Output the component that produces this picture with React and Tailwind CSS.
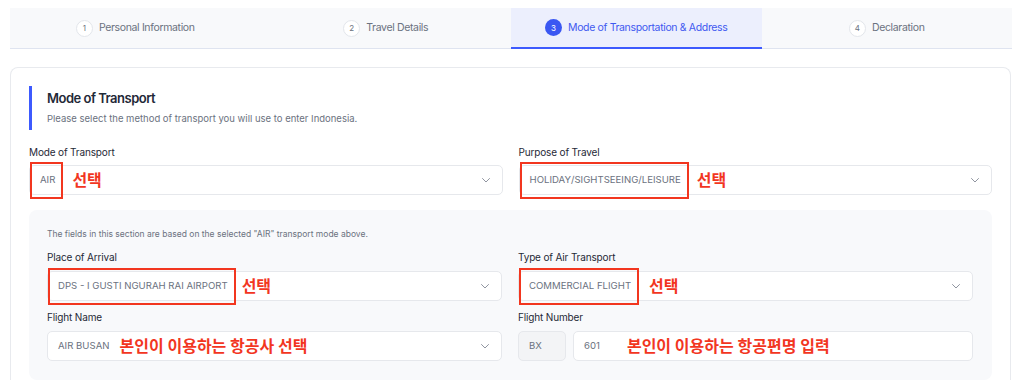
import React from 'react';

const steps = [
  { n: 1, label: 'Personal Information' },
  { n: 2, label: 'Travel Details' },
  { n: 3, label: 'Mode of Transportation & Address', active: true },
  { n: 4, label: 'Declaration' },
];

function Chevron() {
  return (
    <svg width="12" height="12" viewBox="0 0 24 24" fill="none" stroke="#6b7280" strokeWidth="1.5" strokeLinecap="round" strokeLinejoin="round">
      <path d="M5 9l7 7 7-7" />
    </svg>
  );
}

// red annotation box drawn over the selected value
function Marked({ children }) {
  return (
    <span className="relative">
      {children}
      <span className="pointer-events-none absolute -left-[10px] -right-[8px] -top-[11px] -bottom-[12px] border-2 border-[#f2361f]" />
    </span>
  );
}

function Note({ children, className = '' }) {
  return <span className={`text-[16px] font-bold text-[#f2361f] leading-none ${className}`}>{children}</span>;
}

function Select({ children }) {
  return (
    <div className="flex h-[30px] items-center justify-between rounded-[5px] border border-[#e6e8ec] bg-white pl-[10px] pr-[10px]">
      <div className="flex items-center text-[9.6px] text-[#6b7280]">{children}</div>
      <Chevron />
    </div>
  );
}

function Field({ label, children, labelGap = 'mb-2' }) {
  return (
    <div className="flex flex-col">
      <div className={`text-[10px] leading-[12px] tracking-[-0.15px] text-[#1f2937] ${labelGap}`}>{label}</div>
      {children}
    </div>
  );
}

export default function App() {
  return (
    <div className="min-h-screen bg-white pt-2" style={{ fontFamily: "Inter, 'Noto Sans CJK KR', sans-serif" }}>
      <div className="ml-[10px] mr-[12px] grid h-[41px] grid-cols-4 border-b border-[#dfe4f0] bg-[#f8f9fb]">
        {steps.map((s) => (
          <div
            key={s.n}
            className={`flex items-center justify-center gap-[6px] ${s.active ? 'border-b-2 border-[#3d5afe] bg-[#eceffd] -mb-px' : ''}`}
          >
            <span
              className={`flex h-[17px] w-[17px] items-center justify-center rounded-full text-[8px] ${
                s.active ? 'bg-[#3a57f2] text-white' : 'border border-[#e3e6eb] bg-white text-[#6b7280]'
              }`}
            >
              {s.n}
            </span>
            <span className={`text-[10.5px] tracking-[-0.35px] ${s.active ? 'text-[#3f59f0]' : 'text-[#6b7280]'}`}>{s.label}</span>
          </div>
        ))}
      </div>

      <div className="ml-[10px] mr-[13px] mt-[18px] rounded-t-[8px] border border-b-0 border-[#e8eaee] bg-white px-[18px] pt-[18px]">
        <div className="border-l-[3px] border-[#3d5afe] pl-[15px] pt-[4px] pb-[5px]">
          <div className="text-[13px] font-semibold leading-[16px] tracking-[-0.5px] text-[#1f2937]">Mode of Transport</div>
          <div className="mt-[7px] text-[9.5px] leading-[12px] text-[#6b7280]">
            Please select the method of transport you will use to enter Indonesia.
          </div>
        </div>

        <div className="mt-4 grid grid-cols-2 gap-4">
          <Field label="Mode of Transport" labelGap="mb-[7px]">
            <Select>
              <Marked>AIR</Marked>
              <Note className="ml-[17px]">선택</Note>
            </Select>
          </Field>
          <Field label="Purpose of Travel" labelGap="mb-[7px]">
            <Select>
              <Marked>HOLIDAY/SIGHTSEEING/LEISURE</Marked>
              <Note className="ml-[16px]">선택</Note>
            </Select>
          </Field>
        </div>

        <div className="mt-[15px] rounded-[8px] bg-[#f8f9fb] pl-[18px] pr-[19px] pt-[18px] pb-[19px]">
          <div className="text-[8.5px] leading-[12px] text-[#6b7280]">
            The fields in this section are based on the selected "AIR" transport mode above.
          </div>
          <div className="mt-[11px] grid grid-cols-2 gap-x-4 gap-y-[10px]">
            <Field label="Place of Arrival">
              <Select>
                <Marked>DPS - I GUSTI NGURAH RAI AIRPORT</Marked>
                <Note className="ml-[14px]">선택</Note>
              </Select>
            </Field>
            <Field label="Type of Air Transport">
              <Select>
                <Marked>COMMERCIAL FLIGHT</Marked>
                <Note className="ml-[18px]">선택</Note>
              </Select>
            </Field>
            <Field label="Flight Name">
              <Select>
                <span>AIR BUSAN</span>
                <Note className="ml-[10px]">본인이 이용하는 항공사 선택</Note>
              </Select>
            </Field>
            <Field label="Flight Number">
              <div className="flex h-[30px] gap-[7px]">
                <div className="flex w-[48px] items-center rounded-[5px] border border-[#e6e8ec] bg-[#f3f4f6] pl-[10px] text-[9.6px] text-[#6b7280]">
                  BX
                </div>
                <div className="flex flex-1 items-center rounded-[5px] border border-[#e6e8ec] bg-white pl-[10px] text-[9.6px] text-[#6b7280]">
                  <span>601</span>
                  <Note className="ml-[27px]">본인이 이용하는 항공편명 입력</Note>
                </div>
              </div>
            </Field>
          </div>
        </div>
      </div>
    </div>
  );
}
